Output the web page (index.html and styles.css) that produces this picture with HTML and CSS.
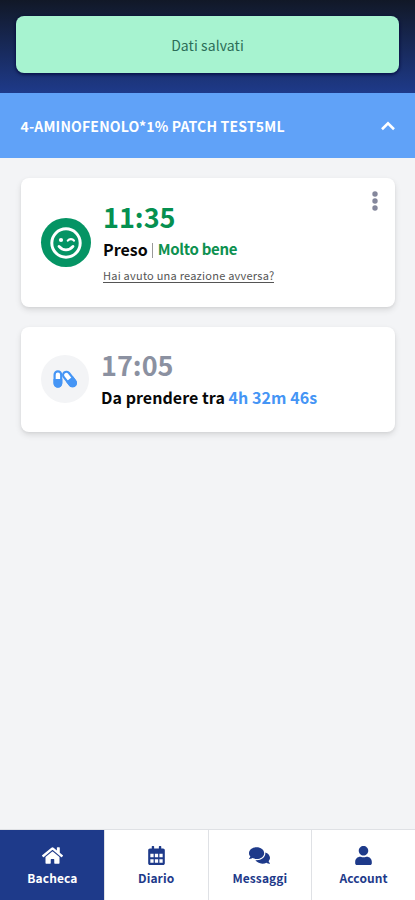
FILE: index.html
```html
<!DOCTYPE html>
<html lang="it">
<head>
<meta charset="utf-8">
<title>Bacheca</title>
<link rel="stylesheet" href="styles.css">
</head>
<body>
<div class="app">
  <header class="top"><div class="toast"><span>Dati salvati</span></div></header>
  <section class="drug">
    <h1>4-AMINOFENOLO*1% PATCH TEST5ML</h1>
    <svg class="chevron" width="16" height="10" viewBox="0 0 16 10"><path d="M2 8.2 8 2.4l6 5.8" fill="none" stroke="#fff" stroke-width="2.6"/></svg>
  </section>
  <main class="list">
    <article class="card taken">
      <div class="badge green">
        <svg width="34" height="34" viewBox="0 0 34 34" fill="none" stroke="#fff" stroke-linecap="round">
          <circle cx="17" cy="17" r="14.2" stroke-width="3"/>
          <circle cx="12" cy="14" r="2.1" fill="#fff" stroke="none"/>
          <path d="M18.800 14.600c1.600-2.100 4.700-2.100 6.200 0" stroke-width="2.2"/>
          <path d="M10 20.400c3.600 4.500 10.400 4.500 14 0" stroke-width="2.800"/>
        </svg>
      </div>
      <div class="info">
        <div class="time">11:35</div>
        <div class="status"><b>Preso</b><i class="sep"></i><b class="mood">Molto bene</b></div>
        <a class="reaction">Hai avuto una reazione avversa?</a>
      </div>
      <svg class="dots" width="6" height="20" viewBox="0 0 6 20" fill="#84879c"><circle cx="3" cy="3" r="2.7"/><circle cx="3" cy="10" r="2.7"/><circle cx="3" cy="17" r="2.7"/></svg>
    </article>
    <article class="card next">
      <div class="badge gray">
        <svg width="24" height="18" viewBox="0 0 24 18">
          <rect x="1.6" y="1.4" width="6.600" height="15" rx="3.300" fill="#fff" stroke="#4595f5" stroke-width="2.2"/>
          <path d="M.5 9h8.800v4.300a4.400 4.400 0 0 1-8.800 0z" fill="#4595f5"/>
          <g transform="rotate(-38 16.5 9)">
            <rect x="13.200" y="0.7" width="6.600" height="16.6" rx="3.300" fill="#fff" stroke="#4595f5" stroke-width="2.2"/>
            <path d="M12.100 9h8.800v4.900a4.400 4.400 0 0 1-8.800 0z" fill="#4595f5"/>
          </g>
        </svg>
      </div>
      <div class="info">
        <div class="time">17:05</div>
        <div class="status"><b>Da prendere tra <span class="count">4h 32m 46s</span></b></div>
      </div>
    </article>
  </main>
  <nav class="tabs">
    <a class="tab active">
      <svg width="21" height="19" viewBox="0 0 576 512"><path d="M280.37 148.26L96 300.11V464a16 16 0 0 0 16 16l112.06-.29a16 16 0 0 0 15.92-16V368a16 16 0 0 1 16-16h64a16 16 0 0 1 16 16v95.64a16 16 0 0 0 16 16.05L464 480a16 16 0 0 0 16-16V300L295.67 148.26a12.19 12.19 0 0 0-15.3 0zM571.6 251.47L488 182.56V44.05a12 12 0 0 0-12-12h-56a12 12 0 0 0-12 12v72.61L318.47 43a48 48 0 0 0-61 0L4.34 251.47a12 12 0 0 0-1.6 16.9l25.5 31A12 12 0 0 0 45.15 301l235.22-193.74a12.19 12.19 0 0 1 15.3 0L530.9 301a12 12 0 0 0 16.9-1.6l25.5-31a12 12 0 0 0-1.7-16.93z"/></svg>
      <span>Bacheca</span>
    </a>
    <a class="tab">
      <svg width="17" height="19" viewBox="0 0 448 512"><path fill-rule="evenodd" d="M0 464c0 26.500 21.500 48 48 48h352c26.500 0 48-21.500 48-48V160H0zM58 210h88v94H58zm122 0h88v94h-88zm122 0h88v94h-88zM58 354h88v94H58zm122 0h88v94h-88zm122 0h88v94h-88zM400 64h-48V16c0-8.800-7.200-16-16-16h-32c-8.800 0-16 7.200-16 16v48H160V16c0-8.800-7.200-16-16-16h-32c-8.800 0-16 7.200-16 16v48H48C21.500 64 0 85.500 0 112v48h448v-48c0-26.500-21.500-48-48-48z"/></svg>
      <span>Diario</span>
    </a>
    <a class="tab">
      <svg width="21" height="19" viewBox="0 0 576 512"><path d="M416 192c0-88.400-93.100-160-208-160S0 103.600 0 192c0 34.300 14.100 65.900 38 92-13.400 30.200-35.500 54.200-35.800 54.500-2.200 2.300-2.800 5.700-1.500 8.700S4.800 352 8 352c36.600 0 66.900-12.300 88.700-25 32.200 15.700 70.300 25 111.300 25 114.900 0 208-71.600 208-160zm122 220c23.900-26 38-57.700 38-92 0-66.900-53.500-124.200-129.300-148.100.9 6.600 1.300 13.300 1.300 20.100 0 105.900-107.700 192-240 192-10.800 0-21.300-.8-31.700-1.900C207.800 439.600 281.800 480 368 480c41 0 79.100-9.200 111.300-25 21.800 12.700 52.100 25 88.700 25 3.200 0 6.100-1.900 7.300-4.800 1.300-2.900.7-6.300-1.500-8.700-.3-.3-22.400-24.200-35.800-54.500z"/></svg>
      <span>Messaggi</span>
    </a>
    <a class="tab">
      <svg width="17" height="19" viewBox="0 0 448 512"><path d="M224 256c70.700 0 128-57.300 128-128S294.700 0 224 0 96 57.300 96 128s57.300 128 128 128zm89.600 32h-16.700c-22.200 10.200-46.900 16-72.900 16s-50.600-5.800-72.900-16h-16.700C60.200 288 0 348.200 0 422.400V464c0 26.500 21.500 48 48 48h352c26.500 0 48-21.500 48-48v-41.600c0-74.200-60.200-134.400-134.400-134.400z"/></svg>
      <span>Account</span>
    </a>
  </nav>
</div>
</body>
</html>
```

FILE: styles.css
```css
* { box-sizing: border-box; }
body {
  margin: 0;
  font-family: "Noto Sans CJK JP", "Noto Sans", sans-serif;
  background: #f3f4f6;
  color: #080808;
}
svg { display: block; flex: none; }
.app {
  height: 900px;
  display: flex;
  flex-direction: column;
  white-space: nowrap;
}
.top {
  height: 93px;
  padding: 16px 16px 0;
  background: linear-gradient(#111827, #1e3a8a);
}
.toast {
  height: 57px;
  border-radius: 8px;
  background: #a7f3d0;
  box-shadow: 0 1px 3px 1px rgba(0, 5, 55, .65);
  color: #2c6e58;
  font-size: 14px;
  letter-spacing: .08px;
  display: flex;
  align-items: center;
  justify-content: center;
}
.drug {
  height: 65px;
  padding: 0 19px 0 20.5px;
  background: #60a2f8;
  display: flex;
  align-items: center;
  justify-content: space-between;
}
h1 {
  margin: 0;
  font-size: 14px;
  line-height: 20px;
  font-weight: 700;
  letter-spacing: .18px;
  color: #fff;
}
.list {
  flex: 1;
  padding: 20px 20px 0 21px;
  display: flex;
  flex-direction: column;
  gap: 20px;
}
.card {
  display: flex;
  background: #fff;
  border-radius: 8px;
  box-shadow: 0 3px 6px rgba(0, 0, 0, .11), 0 1px 3px rgba(0, 0, 0, .05);
}
.taken { height: 129px; padding: 12px 17px 0 19.5px; }
.next { height: 105px; padding: 12px 17px 0 20px; }
.badge {
  flex: none;
  border-radius: 50%;
  display: flex;
  align-items: center;
  justify-content: center;
}
.green { width: 50px; height: 49px; margin-top: 28px; background: #059464; }
.gray { width: 48px; height: 48px; margin-top: 16px; background: #f3f4f6; }
.info { flex: 1; margin-left: 12px; }
.taken .info { margin-left: 12.5px; padding-top: 1px; }
.time {
  font-size: 27px;
  line-height: 52px;
  height: 42px;
  font-weight: 700;
  color: #8b91a1;
}
.taken .time { color: #059050; }
.status {
  display: flex;
  align-items: center;
  height: 32px;
  font-size: 16px;
  line-height: 32px;
}
.taken .status { height: 31px; }
.status b { font-weight: 700; }
.next .status b { letter-spacing: .05px; }
.sep { width: 1px; height: 15px; margin: 3px 5px 0 4px; background: #999; }
.status .mood { font-size: 15px; line-height: 34px; letter-spacing: -.3px; color: #0d9150; }
.count { color: #4595f5; }
.reaction {
  display: block;
  width: max-content;
  height: 19px;
  font-size: 11px;
  line-height: 22px;
  letter-spacing: .23px;
  color: #555;
  border-bottom: 1px solid #555;
}
.dots { margin-top: 1px; }
.tabs {
  height: 71px;
  display: grid;
  grid-template-columns: repeat(4, 1fr);
  border-top: 1px solid #dfe1e5;
  background: #fff;
}
.tab {
  display: flex;
  flex-direction: column;
  align-items: center;
  padding-top: 16px;
  color: #1e3a8a;
  font-size: 12px;
  line-height: 18px;
  font-weight: 700;
  letter-spacing: .1px;
  border-left: 1px solid #dfe1e5;
}
.tab svg { fill: currentColor; margin-bottom: 4px; }
.active { background: #1e3a8a; color: #fff; border-left: 0; padding-left: 1px; }
```
